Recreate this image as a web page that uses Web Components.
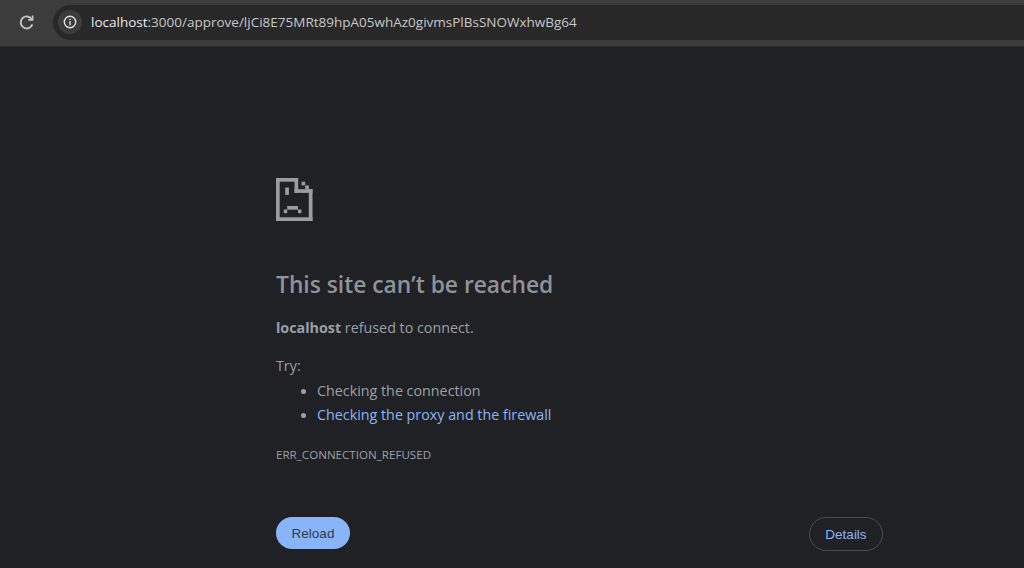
<!DOCTYPE html>
<html>
<head>
<meta charset="utf-8">
<style>
  html, body { margin: 0; height: 100%; background: #202124; overflow: hidden; }
  body { display: flex; flex-direction: column; height: 568px; }
</style>
</head>
<body>
<browser-toolbar url-host="localhost" url-path=":3000/approve/ljCi8E75MRt89hpA05whAz0givmsPlBsSNOWxhwBg64"></browser-toolbar>
<error-page>
  <sad-file slot="icon"></sad-file>
  <span slot="title">This site can’t be reached</span>
  <span slot="summary"><b>localhost</b> refused to connect.</span>
  <span slot="code">ERR_CONNECTION_REFUSED</span>
  <pill-button slot="primary" variant="primary">Reload</pill-button>
  <pill-button slot="secondary" variant="outline">Details</pill-button>
</error-page>
<script>
class BrowserToolbar extends HTMLElement {
  constructor() {
    super();
    this.attachShadow({ mode: 'open' });
  }

  connectedCallback() {
    this.render();
  }

  render() {
    const host = this.getAttribute('url-host') || '';
    const path = this.getAttribute('url-path') || '';
    this.shadowRoot.innerHTML = `
      <style>
        :host {
          display: flex;
          align-items: center;
          height: 47px;
          box-sizing: border-box;
          padding: 5px 0 7px 16px;
          background: #3c3c3c;
          border-bottom: 1px solid #2c2c2c;
          flex: none;
        }
        .reload { width: 22px; height: 22px; margin-right: 15px; flex: none; }
        .omnibox {
          flex: 1;
          height: 35px;
          display: flex;
          align-items: center;
          background: #282828;
          border-radius: 18px 0 0 18px;
          padding-left: 5px;
          font: 13.5px "Open Sans", sans-serif;
          color: #c7c7c7;
          white-space: nowrap;
        }
        .info {
          width: 24px;
          height: 24px;
          border-radius: 50%;
          background: #3c3c3c;
          display: flex;
          align-items: center;
          justify-content: center;
          margin-right: 9px;
        }
        .host { color: #e8eaed; }
      </style>
      <svg class="reload" viewBox="0 0 22 22" fill="none" stroke="#c4c4c4" stroke-width="1.9">
        <path d="M16.4 13.4a6 6 0 1 1-.6-5.2"/>
        <path d="M16.6 4.6v4.3h-4.3" stroke-width="1.7"/>
      </svg>
      <div class="omnibox">
        <span class="info">
          <svg width="14" height="14" viewBox="0 0 14 14" fill="none" stroke="#e0e0e0" stroke-width="1.4">
            <circle cx="7" cy="7" r="5.7"/>
            <path d="M7 6v4.2M7 3.7v1.3"/>
          </svg>
        </span>
        <span><span class="host">${host}</span>${path}</span>
      </div>
    `;
  }
}

class SadFile extends HTMLElement {
  constructor() {
    super();
    this.attachShadow({ mode: 'open' });
  }

  connectedCallback() {
    this.shadowRoot.innerHTML = `
      <style>
        :host { display: block; width: 37px; height: 43px; }
        svg { display: block; }
      </style>
      <svg width="37" height="43" viewBox="0 0 37 43" fill="#9a9c9f">
        <rect x="0" y="0" width="3.7" height="43"/>
        <rect x="0" y="0" width="22" height="3.7"/>
        <rect x="0" y="39.3" width="36.5" height="3.7"/>
        <rect x="32.8" y="11" width="3.7" height="32"/>
        <rect x="18.5" y="0" width="3.7" height="15"/>
        <rect x="18.5" y="11.2" width="18" height="3.7"/>
        <rect x="25.5" y="3.7" width="3.7" height="3.7"/>
        <rect x="29.2" y="7.4" width="3.7" height="3.7"/>
        <rect x="9.2" y="9.5" width="3.7" height="7.4"/>
        <rect x="7.8" y="31.5" width="3.4" height="3.7"/>
        <rect x="11.2" y="28" width="10.8" height="3.7"/>
        <rect x="22" y="31.5" width="3.4" height="3.7"/>
      </svg>
    `;
  }
}

class PillButton extends HTMLElement {
  constructor() {
    super();
    this.attachShadow({ mode: 'open' });
  }

  connectedCallback() {
    this.shadowRoot.innerHTML = `
      <style>
        :host {
          display: flex;
          align-items: center;
          justify-content: center;
          box-sizing: border-box;
          height: 32px;
          width: 74px;
          border-radius: 17px;
          font: 13.5px "Liberation Sans", Arial, sans-serif;
        }
        :host([variant="primary"]) { background: #8ab4f8; color: #2f3b4d; }
        :host([variant="outline"]) { height: 34px; border: 1px solid #4a4c50; color: #8ab4f8; }
      </style>
      <slot></slot>
    `;
  }
}

class ErrorPage extends HTMLElement {
  constructor() {
    super();
    this.attachShadow({ mode: 'open' });
  }

  connectedCallback() {
    this.shadowRoot.innerHTML = `
      <style>
        :host {
          display: block;
          flex: 1;
          padding: 131px 141px 0 276px;
          font: 14.3px "Open Sans", sans-serif;
          color: #9aa0a6;
        }
        .title {
          margin: 48px 0 0;
          font-size: 22.8px;
          font-weight: 600;
          line-height: 32px;
          color: #8e9399;
        }
        .summary { margin-top: 17px; line-height: 20px; }
        .try { margin-top: 18px; line-height: 20px; }
        ul { margin: 3px 0 0; padding: 0 0 0 25px; list-style: none; }
        li { display: flex; align-items: center; gap: 11px; height: 24px; line-height: 24px; }
        li i { width: 5px; height: 5px; border-radius: 50%; background: #9aa0a6; flex: none; }
        li.link span { color: #8ab4f8; }
        .code { margin-top: 20px; font-size: 11.6px; line-height: 16px; }
        .actions { display: flex; justify-content: space-between; align-items: flex-start; margin-top: 54px; }
      </style>
      <slot name="icon"></slot>
      <h1 class="title"><slot name="title"></slot></h1>
      <div class="summary"><slot name="summary"></slot></div>
      <div class="try">Try:</div>
      <ul>
        <li><i></i><span>Checking the connection</span></li>
        <li class="link"><i></i><span>Checking the proxy and the firewall</span></li>
      </ul>
      <div class="code"><slot name="code"></slot></div>
      <div class="actions">
        <slot name="primary"></slot>
        <slot name="secondary"></slot>
      </div>
    `;
  }
}

customElements.define('browser-toolbar', BrowserToolbar);
customElements.define('sad-file', SadFile);
customElements.define('pill-button', PillButton);
customElements.define('error-page', ErrorPage);
</script>
</body>
</html>
